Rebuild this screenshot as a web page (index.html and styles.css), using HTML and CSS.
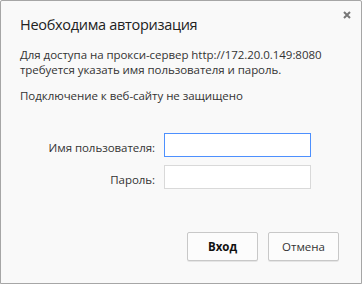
FILE: index.html
```html
<!DOCTYPE html>
<html lang="ru">
  <head>
    <meta charset="UTF-8" />
    <title>Необходима авторизация</title>
    <link rel="stylesheet" href="styles.css">
  </head>
  <body>
    <div class="dialog">
      <button class="close" type="button" aria-label="Закрыть">
        <svg width="8" height="8" viewBox="0 0 8 8">
          <path d="M1 1L7 7M7 1L1 7" stroke="#777" stroke-width="2" />
        </svg>
      </button>
      <h1 class="title">Необходима авторизация</h1>
      <p class="text">Для доступа на прокси-сервер http://172.20.0.149:8080<br />требуется указать имя пользователя и пароль.</p>
      <p class="text notice">Подключение к веб-сайту не защищено</p>

      <form class="form">
        <div class="row">
          <label for="user">Имя пользователя:</label>
          <input id="user" class="field focused" type="text" />
        </div>
        <div class="row">
          <label for="pass">Пароль:</label>
          <input id="pass" class="field" type="password" />
        </div>
        <div class="buttons">
          <button type="submit" class="btn primary">Вход</button>
          <button type="button" class="btn">Отмена</button>
        </div>
      </form>
    </div>
  </body>
</html>
```

FILE: styles.css
```css
html,
body {
  margin: 0;
  padding: 0;
  background: #f9f9f9;
}
body {
  font-family: "Open Sans", "Noto Sans", sans-serif;
  color: #333;
}
.dialog {
  position: relative;
  box-sizing: border-box;
  width: 362px;
  height: 284px;
  border: 1px solid #a6a6a6;
  border-radius: 2px 2px 0 0;
  background: #f9f9f9;
  padding: 14px 20px 0 19px;
}
.close {
  position: absolute;
  top: 10px;
  right: 10px;
  width: 8px;
  height: 8px;
  padding: 0;
  border: none;
  background: none;
  display: flex;
}
.title {
  margin: 0;
  font-size: 14.5px;
  font-weight: normal;
  letter-spacing: -0.3px;
  line-height: 20px;
  color: #222;
}
.text {
  margin: 12px 0 0 0;
  font-size: 11.5px;
  letter-spacing: -0.05px;
  line-height: 15px;
  color: #333;
}
.notice {
  margin-top: 11px;
}
.form {
  margin-top: 30px;
}
.row {
  display: flex;
  align-items: center;
  gap: 9px;
  margin-bottom: 8px;
}
.row label {
  width: 135px;
  padding-top: 4px;
  text-align: right;
  font-size: 11.5px;
  letter-spacing: -0.05px;
  line-height: 15px;
  color: #333;
}
.field {
  box-sizing: border-box;
  width: 147px;
  height: 24px;
  margin: 0;
  border: 1px solid #d9d9d9;
  background: #fff;
  outline: none;
}
.field.focused {
  border-color: #4d90fe;
}
.buttons {
  display: flex;
  justify-content: flex-end;
  gap: 10px;
  margin-top: 43px;
  margin-right: 2px;
}
.btn {
  box-sizing: border-box;
  width: 71px;
  height: 29px;
  border: 1px solid #c8c8c8;
  border-radius: 2px;
  background: #fcfcfc;
  font-family: "Open Sans", "Noto Sans", sans-serif;
  font-size: 11.5px;
  color: #333;
  box-shadow: 0 1px 0 rgba(0, 0, 0, 0.08);
}
.btn.primary {
  font-weight: bold;
  color: #111;
}
```
